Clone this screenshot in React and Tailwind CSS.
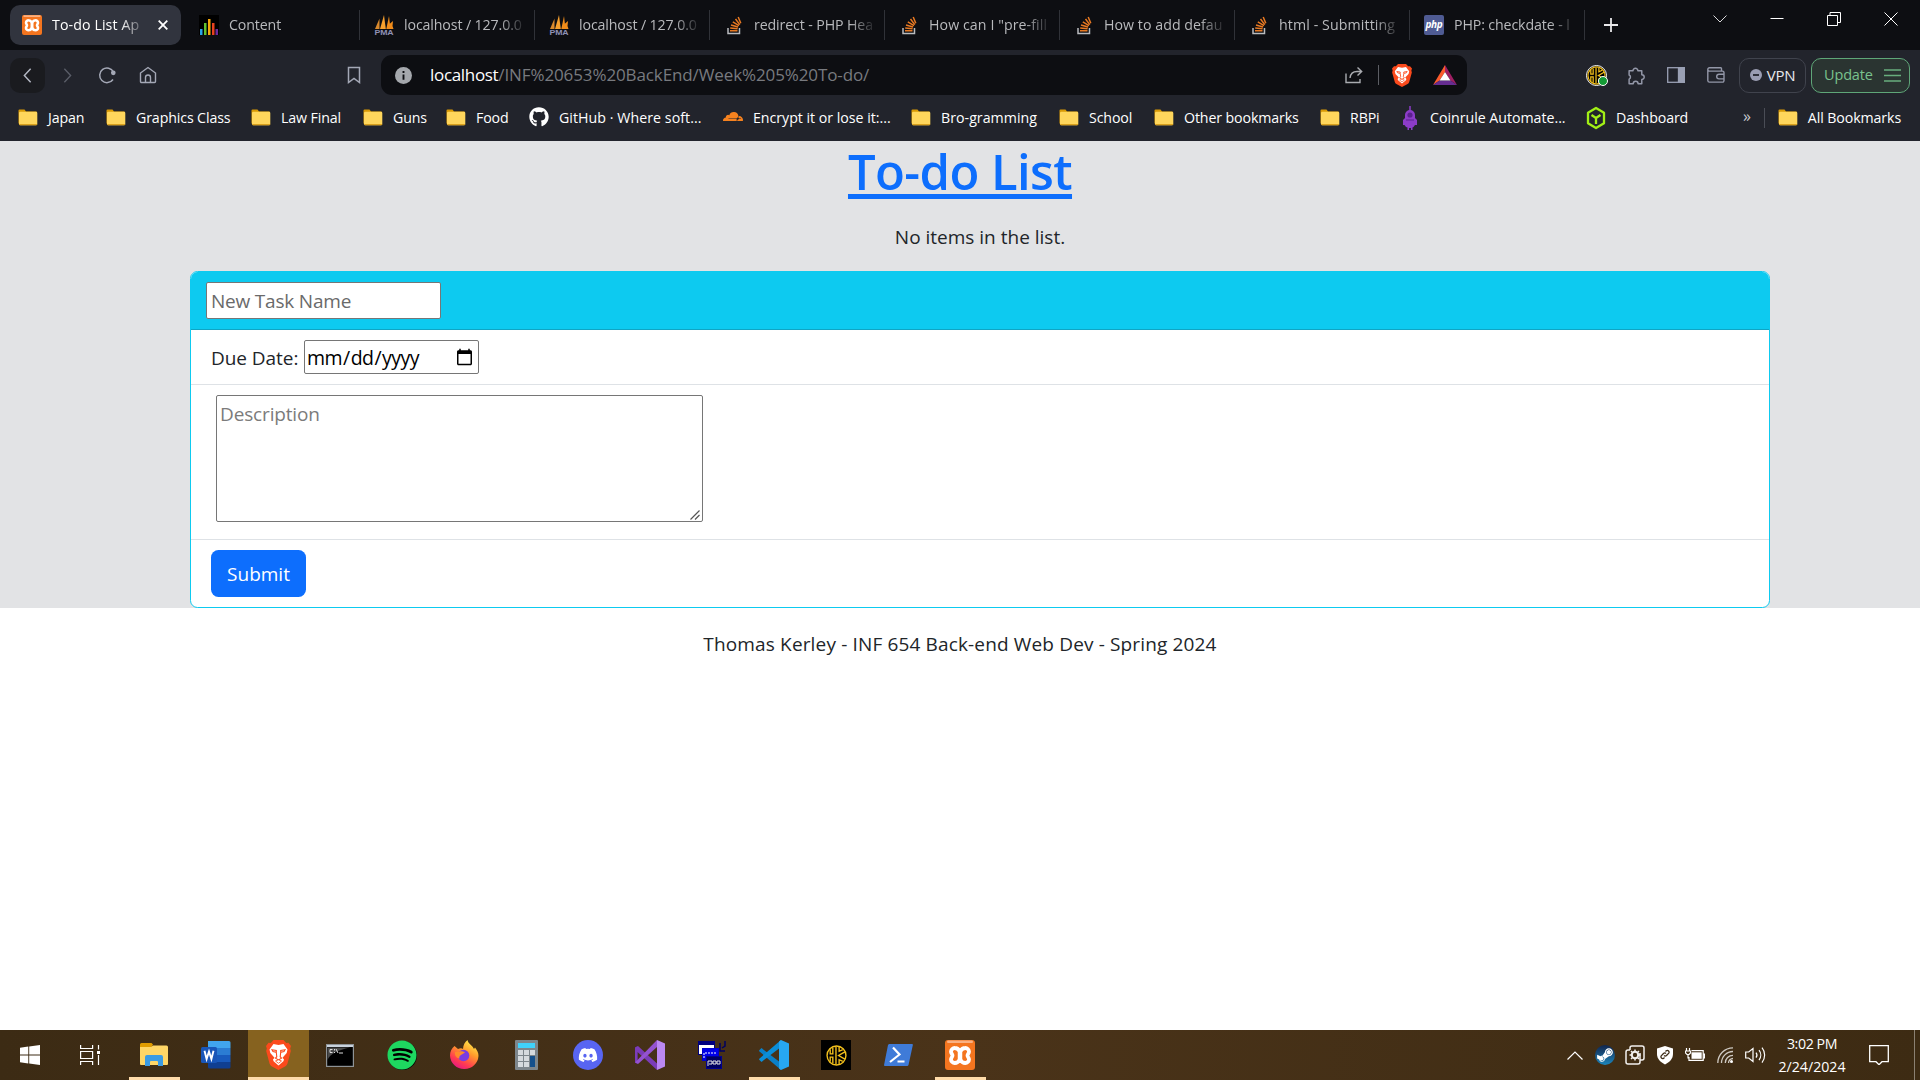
import React from "react";
import { FaGithub, FaSpotify, FaDiscord, FaCloudflare, FaSteamSymbol } from "react-icons/fa";

/* ---------- Brand drawings ---------- */

function Xampp({ className }) {
  return (
    <svg viewBox="0 0 30 30" className={className}>
      <rect x="0" y="0" width="30" height="30" rx="3" fill="#f4751f" />
      <rect x="2" y="0.5" width="26" height="2.5" rx="1.2" fill="#f9b183" />
      <path
        d="M15 11.500c-1.500-2.500-3-3.500-5.200-3.500A3.700 3.700 0 0 0 6 11.600c0 2 1.500 2.400 1.500 3.900S6 17.500 6 19.400A3.700 3.700 0 0 0 9.800 23c2.200 0 3.700-1 5.200-3.500 1.500 2.500 3 3.500 5.200 3.500a3.700 3.700 0 0 0 3.800-3.600c0-1.900-1.500-2.400-1.500-3.900s1.500-1.900 1.500-3.900A3.700 3.700 0 0 0 20.200 8C18 8 16.500 9 15 11.500Z"
        fill="none"
        stroke="#fff"
        strokeWidth="3.800"
        strokeLinejoin="round"
      />
      <path d="M15 11v9" stroke="#fff" strokeWidth="4.500" />
    </svg>
  );
}

function Bars() {
  return (
    <svg viewBox="0 0 20 20" className="h-5 w-5">
      <rect width="20" height="20" fill="#000" />
      <rect x="1" y="14" width="2.500" height="6" fill="#29a3e8" />
      <rect x="5" y="8" width="2.500" height="12" fill="#62c12d" />
      <rect x="9" y="4" width="2.500" height="16" fill="#f5a80c" />
      <rect x="13" y="8" width="2.500" height="12" fill="#e8421f" />
      <rect x="16.500" y="14" width="2.500" height="6" fill="#6b2a9c" />
    </svg>
  );
}

function Pma() {
  return (
    <svg viewBox="0 0 20 20" className="h-5 w-5">
      <path d="M1 14 5.500 3.500V14Z" fill="#d9892c" />
      <path d="M6 14 10 0l1.800 14Z" fill="#f6a02e" />
      <path d="M12.300 14 15 1l1.500 13Z" fill="#f08c1a" />
      <path d="M15.500 9l3.500-3-.5 5 1 3h-4Z" fill="#f08c1a" />
      <text x="10" y="19.500" textAnchor="middle" textLength="19" lengthAdjust="spacingAndGlyphs" className="font-['Liberation_Sans'] text-[8px] font-bold" fill="#8f91b4">
        PMA
      </text>
    </svg>
  );
}

function Stack() {
  return (
    <svg viewBox="0 0 20 20" className="h-5 w-5" fill="none">
      <path d="M4 13v5.500h11.500V13" stroke="#b9bbbe" strokeWidth="1.500" />
      <path d="M6 15.800h7.500M6.200 13l7.400.8M7 10l7.100 2M8.800 6.800l6.200 3.900M11.500 4l4.300 5.600M14.200 2l2.600 6.300" stroke="#e87922" strokeWidth="1.500" />
    </svg>
  );
}

function Php() {
  return (
    <div className="flex h-5 w-5 items-center justify-center rounded-[2px] bg-[#4f5b93] font-['Open_Sans'] text-[10px] leading-none font-bold tracking-[-0.3px] text-white italic">
      <span className="-mt-0.5">php</span>
    </div>
  );
}

function Folder() {
  return (
    <svg viewBox="0 0 20 17" className="h-[17px] w-5 shrink-0">
      <path d="M.5 1.500A1 1 0 0 1 1.500.5h5l1.500 2h10a1 1 0 0 1 1 1v11h-18.500Z" fill="#d99a06" />
      <path d="M1 4a1.300 1.300 0 0 1 1.300-1.300H18A1.300 1.300 0 0 1 19.300 4v11a1.300 1.300 0 0 1-1.300 1.300H2.300A1.300 1.300 0 0 1 1 15Z" fill="#ffd65c" />
      <path d="M1 15h18.300a1.300 1.300 0 0 1-1.300 1.300H2.300A1.300 1.300 0 0 1 1 15Z" fill="#d9a01c" />
    </svg>
  );
}

function Brave({ className }) {
  return (
    <svg viewBox="0 0 25 30" preserveAspectRatio="none" className={className}>
      <path d="M7.500 0h10l2.700 3 2.300-.2L25 6l-.8 2.500.6 2.500-3.300 12.500a5 5 0 0 1-2 2.700L12.500 30l-7-3.800a5 5 0 0 1-2-2.700L.2 11l.6-2.500L0 6l2.500-3.200 2.300.2Z" fill="#fb4a1c" />
      <path d="M7.500 4l5 1 5-1 4 5.500-.8 3.500-4.200 4.700 1.500 1.800-.6 1.800-4.900 4.200-4.900-4.200L7 19.500l1.500-1.800L4.300 13l-.8-3.500Z" fill="#fff" />
      <path d="M6 9.800l4.300.7v1.800L7 11.500ZM19 9.800l-4.300.7v1.800l3.300-.8ZM10.300 12.500l.5 4.200-1.300 1.500 3 1.700 3-1.700-1.300-1.500.5-4.200" fill="none" stroke="#fb4a1c" strokeWidth="1.100" />
      <path d="M9.500 21l3-1.200 3 1.200-3 2.300Z" fill="#fff" stroke="#fb4a1c" strokeWidth=".8" />
    </svg>
  );
}

function Keeper({ className }) {
  return (
    <svg viewBox="0 0 20 20" className={className} fill="none" stroke="#f3c01c" strokeWidth="1.300">
      <circle cx="10" cy="10" r="9" />
      <path d="M4 4v4.500h2.500V2.500M4 16v-4.500h2.500v6M9.500 1.500v17M12.500 2v4l3.500-1.500M12.500 18v-4l3.500 1.500M18 6.500 12 10l6 3.500" />
    </svg>
  );
}

function Bat() {
  return (
    <svg viewBox="0 0 24 20" className="h-5 w-6">
      <path d="M12 0 0 20l6.500-4.500L12 7Z" fill="#fb5b2c" />
      <path d="M12 0l12 20-6.500-4.500L12 7Z" fill="#9e1f63" />
      <path d="M0 20h24l-6.500-4.500h-11Z" fill="#662d91" />
      <path d="M12 7l5.500 8.500h-11Z" fill="#fff" />
    </svg>
  );
}

function Coinrule() {
  return (
    <svg viewBox="0 0 16 24" className="h-6 w-4">
      <path d="M8 0v5" stroke="#8c3cc8" strokeWidth="1.500" />
      <path d="M3 12V9a5 5 0 0 1 10 0v3l2 2v5h-2l-1.500 2-1 .5V24H9v-2H7v2H5.500v-2.500L4 21l-1.500-2H1v-5Z" fill="#8c3cc8" />
      <circle cx="8" cy="9" r="2.600" fill="#5b2190" />
      <path d="M4 14h8" stroke="#5b2190" />
    </svg>
  );
}

function Cube() {
  return (
    <svg viewBox="0 0 20 24" className="h-6 w-5" fill="none" stroke="#a2ef16" strokeWidth="2.300" strokeLinejoin="round">
      <path d="M10 2 18 6.800v10.400L10 22 2 17.200V6.800Z" />
      <path d="M5.500 9 10 12l4.500-3M10 12v6" />
    </svg>
  );
}

/* ---------- Browser tab strip ---------- */

const tabs = [
  { title: "Content", icon: <Bars /> },
  { title: "localhost / 127.0.0", icon: <Pma /> },
  { title: "localhost / 127.0.0", icon: <Pma /> },
  { title: "redirect - PHP Hea", icon: <Stack /> },
  { title: 'How can I "pre-fill', icon: <Stack />, track: "tracking-[0.08px]" },
  { title: "How to add defau", icon: <Stack />, track: "tracking-[0.04px]" },
  { title: "html - Submitting", icon: <Stack />, track: "tracking-[0.1px]" },
  { title: "PHP: checkdate - l", icon: <Php /> },
];

function TabStrip() {
  return (
    <div className="flex h-[50px] items-center bg-[#0d0e12] pl-2.5 text-[14.2px] tracking-[-0.12px]">
      <div className="mr-1 flex h-10 w-[171px] shrink-0 items-center rounded-[10px] bg-[#31343e] pl-3 text-white">
        <Xampp className="h-5 w-5 shrink-0" />
        <span className="ml-2.5 w-[95px] tracking-[0.1px] whitespace-nowrap [mask-image:linear-gradient(to_right,#000_72%,transparent)]">To-do List Ap</span>
        <svg viewBox="0 0 10 10" className="ml-[11px] h-2.5 w-2.5" stroke="#fff" strokeWidth="1.800">
          <path d="M.7.7l8.600 8.600M9.300.7.700 9.300" />
        </svg>
      </div>
      {tabs.map((t, i) => (
        <div key={i} className={`flex h-[30px] w-[175px] shrink-0 items-center border-r border-[#303238] pl-[14px] text-[#b9babd] ${t.track || ""}`}>
          <span className="w-5 shrink-0">{t.icon}</span>
          <span className="ml-2.5 w-[123px] whitespace-nowrap [mask-image:linear-gradient(to_right,#000_78%,transparent)]">{t.title}</span>
        </div>
      ))}
      <svg viewBox="0 0 14 14" className="ml-[19px] h-3.5 w-3.5" stroke="#e8e8ea" strokeWidth="1.800">
        <path d="M7 0v14M0 7h14" />
      </svg>
      <div className="-mt-3 ml-auto flex items-center gap-[43px] pr-[22px]">
        <svg viewBox="0 0 14 14" className="h-3.5 w-3.5" fill="none" stroke="#d8d8da">
          <path d="M.5 3.500 7 10 13.500 3.500" />
        </svg>
        <svg viewBox="0 0 14 14" className="h-3.5 w-3.5" stroke="#fff">
          <path d="M.5 6.500h13" />
        </svg>
        <svg viewBox="0 0 14 14" className="h-3.5 w-3.5" fill="none" stroke="#fff">
          <path d="M.5 3.500h10v10H.5ZM3 3.500V.5h10.500v10H11" />
        </svg>
        <svg viewBox="0 0 14 14" className="h-3.5 w-3.5" stroke="#fff">
          <path d="M.5.5l13 13M13.500.5l-13 13" />
        </svg>
      </div>
    </div>
  );
}

/* ---------- Navigation bar ---------- */

function Toolbar() {
  return (
    <div className="flex h-[50px] items-center pl-2.5">
      <div className="flex h-[35px] w-[35px] items-center justify-center rounded-[10px] bg-[#1a1b1f]">
        <svg viewBox="0 0 10 18" className="h-[17px] w-[9px]" fill="none" stroke="#b4b8c4" strokeWidth="1.600">
          <path d="M8.500 1.500 1.500 9l7 7.500" />
        </svg>
      </div>
      <svg viewBox="0 0 10 18" className="ml-[18px] h-[17px] w-[9px]" fill="none" stroke="#5a5d68" strokeWidth="1.500">
        <path d="M1.500 1.500 8.500 9l-7 7.500" />
      </svg>
      <svg viewBox="0 0 18 18" className="ml-[26px] h-[18px] w-[18px]" fill="none" stroke="#a4a8b6" strokeWidth="1.500">
        <path d="M15 13.500A7.300 7.300 0 1 1 15.500 6" />
        <circle cx="15.300" cy="6.800" r="1.600" fill="#a4a8b6" />
      </svg>
      <svg viewBox="0 0 18 18" className="ml-[23px] h-[18px] w-[18px]" fill="none" stroke="#a4a8b6" strokeWidth="1.400">
        <path d="M1.500 7 9 1.500 16.500 7v8.500a1 1 0 0 1-1 1h-13a1 1 0 0 1-1-1ZM6.500 16v-4.500a2.500 2.500 0 0 1 5 0V16" />
      </svg>
      <svg viewBox="0 0 14 18" className="ml-[190px] h-[18px] w-3.5" fill="none" stroke="#a4a8b6" strokeWidth="1.500">
        <path d="M1.500 1.500h11v15L7 12.500l-5.500 4Z" />
      </svg>

      <div className="ml-5 flex h-10 w-[1086px] shrink-0 items-center rounded-[11px] bg-[#0d0e12] pl-3.5">
        <svg viewBox="0 0 18 18" className="h-[17px] w-[17px]">
          <circle cx="9" cy="9" r="9" fill="#a5a8ad" />
          <path d="M9 8v5.500M9 4.300v2" stroke="#0d0e12" strokeWidth="2" />
        </svg>
        <span className="ml-[18px] text-[17px] tracking-[-0.32px] text-white">localhost</span>
        <span className="text-[17px] tracking-[-0.11px] text-[#787a7f]">/INF%20653%20BackEnd/Week%205%20To-do/</span>
        <svg viewBox="0 0 18 18" className="ml-auto h-[18px] w-[18px]" fill="none" stroke="#a9abb0" strokeWidth="1.400">
          <path d="M1 7.500v9h14V13M5 12c.5-4.500 3-6.500 7-6.500h4M12.500 1.500l4.200 4-4.200 4" />
        </svg>
        <div className="ml-[15px] h-5 w-px bg-[#5c5e64]" />
        <Brave className="ml-[13px] h-[23px] w-5" />
        <div className="mr-[10px] ml-[21px]">
          <Bat />
        </div>
      </div>

      <div className="relative ml-[119px] h-[21px] w-[21px]">
        <div className="flex h-[21px] w-[21px] items-center justify-center rounded-full border border-white bg-black">
          <Keeper className="h-[19px] w-[19px]" />
        </div>
        <div className="absolute -right-px bottom-0 h-2.5 w-2.5 rounded-full border border-white bg-[#149b35]" />
      </div>
      <svg viewBox="0 0 18 18" className="ml-5 h-[19px] w-[19px]" fill="none" stroke="#9397a8" strokeWidth="1.400" strokeLinejoin="round">
        <path d="M2 4.500h3.700a2.300 2.300 0 1 1 4.600 0H14v3.700a2.300 2.300 0 1 1 0 4.600v4h-3.500a2.300 2.300 0 0 0-4.600 0H2v-4.300a2.200 2.200 0 0 0 0-4Z" />
      </svg>
      <svg viewBox="0 0 18 16" className="ml-[21px] h-4 w-[18px]" fill="none" stroke="#9aa0b4" strokeWidth="1.300">
        <rect x=".7" y=".7" width="16.600" height="14.600" />
        <rect x="11.500" y=".7" width="5.800" height="14.600" fill="#9aa0b4" />
      </svg>
      <svg viewBox="0 0 18 16" className="ml-[22px] h-4 w-[18px]" fill="none" stroke="#9397a8" strokeWidth="1.400">
        <path d="M14.500 4V1.500A.8.8 0 0 0 13.700.7H2.500a1.700 1.700 0 0 0 0 3.400h13a1.500 1.500 0 0 1 1.500 1.500v8a1.500 1.500 0 0 1-1.500 1.500h-13A1.700 1.700 0 0 1 .8 13.500v-11M17 7.300h-5a2.300 2.300 0 0 0 0 4.600h5" />
      </svg>
      <div className="ml-[14px] flex h-[35px] w-[67px] shrink-0 items-center justify-center gap-[5px] rounded-[10px] border border-[#40434d] text-[#e8e9ee]">
        <svg viewBox="0 0 12 12" className="h-3 w-3">
          <circle cx="6" cy="6" r="6" fill="#9a9db2" />
          <path d="M3 6h6" stroke="#22242c" strokeWidth="1.800" />
        </svg>
        <span className="text-[15px] tracking-[-0.2px]">VPN</span>
      </div>
      <div className="ml-[5px] flex h-[35px] w-[99px] shrink-0 items-center justify-between rounded-[10px] border-[1.5px] border-[#5fa678] bg-[#2a3431] pr-[8px] pl-[12px] text-[14.5px] tracking-[-0.15px] text-[#79c28d]">
        <span>Update</span>
        <svg viewBox="0 0 17 13" className="h-[13px] w-[17px]" stroke="#68ad7d" strokeWidth="1.500">
          <path d="M0 1h17M0 6.500h17M0 12h17" />
        </svg>
      </div>
    </div>
  );
}

/* ---------- Bookmarks bar ---------- */

const bookmarks = [
  { label: "Japan", w: "w-[88px]" },
  { label: "Graphics Class", w: "w-[145px]" },
  { label: "Law Final", w: "w-[112px]" },
  { label: "Guns", w: "w-[83px]" },
  { label: "Food", w: "w-[83px]" },
  { label: "GitHub · Where soft...", w: "w-[194px]", icon: <FaGithub className="h-5 w-5 text-white" />, track: "tracking-[0.05px]" },
  { label: "Encrypt it or lose it:...", w: "w-[188px]", icon: <FaCloudflare className="h-5 w-5 text-[#f6821f]" />, track: "tracking-[-0.02px]" },
  { label: "Bro-gramming", w: "w-[148px]", track: "tracking-[0.02px]" },
  { label: "School", w: "w-[95px]" },
  { label: "Other bookmarks", w: "w-[166px]" },
  { label: "RBPi", w: "w-[80px]" },
  { label: "Coinrule Automate...", w: "w-[186px]", icon: <Coinrule />, track: "tracking-[-0.02px]" },
  { label: "Dashboard", w: "w-[140px]", icon: <Cube /> },
];

function Bookmarks() {
  return (
    <div className="flex h-[41px] items-center pb-1.5 pl-[18px] text-[14.2px] tracking-[-0.12px] text-white">
      {bookmarks.map((b) => (
        <div key={b.label} className={`flex shrink-0 items-center gap-2.5 whitespace-nowrap ${b.w} ${b.track || ""}`}>
          <span className="flex w-5 shrink-0 justify-center">{b.icon || <Folder />}</span>
          <span>{b.label}</span>
        </div>
      ))}
      <span className="ml-[17px] pb-1 text-[16px] text-[#c6c8ce]">»</span>
      <div className="ml-[13px] h-5 w-px bg-[#4a4d56]" />
      <div className="ml-[13px] flex items-center gap-2.5 whitespace-nowrap">
        <Folder />
        <span className="tracking-[-0.1px]">All Bookmarks</span>
      </div>
    </div>
  );
}

/* ---------- Page ---------- */

function TodoPage() {
  return (
    <main className="flex-1 bg-white text-[19px] leading-[30px] text-[#212529]">
      <div className="flex h-[467px] flex-col bg-[#e2e3e5]">
        <h1 className="h-[60px] text-center text-[49px] leading-[61px] font-semibold tracking-[-0.6px] text-[#0d6efd] underline decoration-[5px] underline-offset-[4px]">To-do List</h1>
        <div className="mx-auto mt-[21px] w-[1580px] translate-x-5">
          <p className="text-center">No items in the list.</p>
          <form className="mt-[19px] h-[337px] overflow-hidden rounded-[7.5px] border border-[#0dcaf0] bg-white">
            <div className="flex h-[58px] items-start border-b border-[#0fa5c4] bg-[#0dcaf0] pt-2.5 pl-[15px]">
              <input placeholder="New Task Name" className="h-[37px] w-[235px] rounded-[2px] border border-[#767676] bg-white px-1 tracking-[-0.2px] placeholder:text-[#6a6a6a]" />
            </div>
            <div className="flex h-[55px] items-center border-b border-[#dee2e6] pl-5">
              <label className="w-[93px] pt-0.5 tracking-[-0.05px]">Due Date:</label>
              <input type="date" className="h-[34px] w-[175px] rounded-[2px] border border-[#767676] pt-0.5 pr-0.5 pl-px text-[19.5px] tracking-[-0.55px] text-black" />
            </div>
            <div className="flex h-[155px] items-start border-b border-[#dee2e6] pt-2.5 pl-[25px]">
              <div className="relative h-[127px] w-[487px]">
                <textarea placeholder="Description" className="h-full w-full resize-none rounded-[2px] border border-[#767676] px-[3px] py-[3px] tracking-[-0.15px] placeholder:text-[#7b7b7b]" />
                <svg viewBox="0 0 10 10" className="absolute right-[3px] bottom-0.5 h-2.5 w-2.5" stroke="#555" strokeWidth="1.200">
                  <path d="M.5 9.500l9-9M5 9.500l4.500-4.500" />
                </svg>
              </div>
            </div>
            <div className="flex h-[67px] items-center pl-5">
              <button className="h-[47px] w-[95px] rounded-[7.5px] bg-[#0d6efd] text-white">Submit</button>
            </div>
          </form>
        </div>
      </div>
      <p className="mt-[21px] text-center tracking-[0.15px]">Thomas Kerley - INF 654 Back-end Web Dev - Spring 2024</p>
    </main>
  );
}

/* ---------- Taskbar ---------- */

const apps = [
  {
    name: "Explorer",
    open: true,
    icon: (
      <svg viewBox="0 0 28 24" className="h-6 w-7">
        <path d="M0 1.500A1.500 1.500 0 0 1 1.500 0h10L13 1.500 11.500 4H0Z" fill="#e09c00" />
        <path d="M0 4h11l2-1.500h13.500A1.500 1.500 0 0 1 28 4v17a1 1 0 0 1-1 1H1a1 1 0 0 1-1-1Z" fill="#ffd666" />
        <path d="M5 23V14a2 2 0 0 1 2-2h14a2 2 0 0 1 2 2v9h-5v-4a1 1 0 0 0-1-1h-6a1 1 0 0 0-1 1v4Z" fill="#3b9be3" />
      </svg>
    ),
  },
  {
    name: "Word",
    icon: (
      <svg viewBox="0 0 30 28" className="h-7 w-[30px]">
        <path d="M7 0h21a1.500 1.500 0 0 1 1.500 1.500V7H7Z" fill="#41a5ee" />
        <path d="M7 7h22.500v7H7Z" fill="#2b7cd3" />
        <path d="M7 14h22.500v7H7Z" fill="#185abd" />
        <path d="M7 21h22.500v5a1.500 1.500 0 0 1-1.500 1.500H8.500A1.500 1.500 0 0 1 7 26Z" fill="#103f91" />
        <rect x="0" y="6" width="16" height="16" rx="1.500" fill="#1956b8" />
        <path d="M3.500 9.800 5.600 18 8 10.500 10.400 18l2.100-8.200" fill="none" stroke="#fff" strokeWidth="1.900" />
      </svg>
    ),
  },
  { name: "Brave", active: true, icon: <Brave className="h-[30px] w-[25px]" /> },
  {
    name: "Terminal",
    icon: (
      <svg viewBox="0 0 28 23" className="h-[23px] w-7">
        <rect x=".6" y=".6" width="26.800" height="21.800" fill="#000" stroke="#8e9396" strokeWidth="1.200" />
        <path d="M1 2h26" stroke="#c9d2dc" strokeWidth="2" />
        <path d="M1.500 3.500H24C12 6 4 10 1.500 16Z" fill="#4a4a4a" />
        <path d="M6.500 5.500H4v3h2.500M8.500 5v1.500M8.500 8v1M10 5l2 4M13 9h4" stroke="#ddd" fill="none" />
      </svg>
    ),
  },
  {
    name: "Spotify",
    icon: (
      <span className="flex h-[29px] w-[29px] items-center justify-center rounded-full bg-black">
        <FaSpotify className="h-[30px] w-[30px] shrink-0 text-[#1ed760]" />
      </span>
    ),
  },
  {
    name: "Firefox",
    icon: (
      <svg viewBox="0 0 30 30" className="h-[30px] w-[30px]">
        <defs>
          <linearGradient id="fox" x1=".8" y1="0" x2=".25" y2="1">
            <stop offset="0" stopColor="#fff44f" />
            <stop offset=".4" stopColor="#ff9a2b" />
            <stop offset=".75" stopColor="#ff3b51" />
            <stop offset="1" stopColor="#e31587" />
          </linearGradient>
        </defs>
        <path d="M5.500 6l3.500 3c2-1 4-1 5 0 .2-4 1.800-7 4.500-9 .5 4 5 5 6.500 9l1-1.500c2 2.500 3.500 5 3.500 8.500A14 14 0 0 1 15.500 29 14 14 0 0 1 1 15.500c0-4 1.500-7 4.500-9.500Z" fill="url(#fox)" />
        <circle cx="14.500" cy="15.500" r="5.800" fill="#7a3be0" />
        <path d="M6 12c3 0 5-1 8-.5l2 1-4 2.500c-1.500 1-2 2-1.500 3.500C7 18 5.500 15 6 12Z" fill="#ff8a2a" />
      </svg>
    ),
  },
  {
    name: "Calculator",
    icon: (
      <svg viewBox="0 0 23 30" className="h-[30px] w-[23px]">
        <rect width="23" height="30" rx="1" fill="#7d868c" />
        <rect x="3" y="3" width="17" height="5" fill="#40d2fb" />
        <g fill="#d5dade">
          <rect x="3" y="10" width="5" height="5" />
          <rect x="9" y="10" width="5" height="5" />
          <rect x="15" y="10" width="5" height="5" />
          <rect x="3" y="16" width="5" height="5" />
          <rect x="9" y="16" width="5" height="5" />
          <rect x="3" y="22" width="5" height="5" />
          <rect x="9" y="22" width="5" height="5" />
        </g>
        <rect x="15" y="16" width="5" height="11" fill="#14508c" />
      </svg>
    ),
  },
  {
    name: "Discord",
    icon: (
      <span className="flex h-[30px] w-[30px] items-center justify-center rounded-full bg-[#5865f2]">
        <FaDiscord className="h-5 w-5 text-white" />
      </span>
    ),
  },
  {
    name: "Visual Studio",
    icon: (
      <svg viewBox="0 0 30 30" className="h-[30px] w-[30px]">
        <path d="M0 7.500 2.500 6v18L0 22.500Z" fill="#52218a" />
        <path d="M0 7.500 3 6l19 17.500V30L2.500 12v10L0 22.500Z" fill="#7b3cb8" />
        <path d="M3 24 0 22.500 22 0v7Z" fill="#9452cf" />
        <path d="M22 0l8 3.500v23L22 30Z" fill="#bb88f2" />
      </svg>
    ),
  },
  {
    name: "Putty",
    icon: (
      <svg viewBox="0 0 28 28" className="h-7 w-7">
        <rect x=".5" y=".5" width="16" height="13" fill="#fff" stroke="#000080" />
        <path d="M0 2h17" stroke="#000080" strokeWidth="4" />
        <rect x="4.500" y="7.500" width="16" height="12" fill="#0000e8" stroke="#0000c8" />
        <path d="M6 17v-5h12" stroke="#fff" strokeDasharray="2 1" fill="none" />
        <rect x="8.500" y="15.500" width="15" height="12" fill="#000060" stroke="#000090" />
        <path d="M10 25v-5h4v3h-3M15 23v-3h3v3ZM19 23v-3h3v3Z" stroke="#e6e6e6" fill="none" />
        <path d="M22 2v8h5M27 0v5l-3 2" stroke="#000060" strokeWidth="1.500" fill="none" />
      </svg>
    ),
  },
  {
    name: "VS Code",
    open: true,
    icon: (
      <svg viewBox="0 0 30 30" className="h-[30px] w-[30px]">
        <path d="M0 10.500 2.500 8 22 23v7L0.500 11.500Z" fill="#0a80c8" />
        <path d="M0 19.500 2.500 22 22 7V0L.5 18.500Z" fill="#0b8ed8" />
        <path d="M22 0l8 3.500v23L22 30l-2-1.500V1.500Z" fill="#27a7f2" />
      </svg>
    ),
  },
  {
    name: "Keeper",
    icon: (
      <span className="flex h-[30px] w-[30px] items-center justify-center bg-black">
        <Keeper className="h-[21px] w-[21px]" />
      </span>
    ),
  },
  {
    name: "PowerShell",
    icon: (
      <svg viewBox="0 0 29 22" className="h-[22px] w-[29px]">
        <path d="M5 0h23a1 1 0 0 1 .8 1.300L24.500 21a1.500 1.500 0 0 1-1.300 1H1a1 1 0 0 1-.9-1.300L4 1Z" fill="#3f7bd8" />
        <path d="M9 3.500l6.500 7L6 18M13.500 17.500h7" stroke="#fff" strokeWidth="2.200" fill="none" />
      </svg>
    ),
  },
  { name: "XAMPP", open: true, icon: <Xampp className="h-[30px] w-[30px]" /> },
];

function Tray() {
  return (
    <div className="ml-auto flex h-full items-center text-white">
      <div className="flex items-center">
        <svg viewBox="0 0 16 9" className="mr-3 h-[9px] w-4" fill="none" stroke="#fff" strokeWidth="1.200">
          <path d="M.5 8.500 8 1l7.500 7.500" />
        </svg>
        <span className="mr-2.5 flex h-5 w-5 items-center justify-center rounded-full bg-linear-to-b from-[#10254d] to-[#1a87bd]">
          <FaSteamSymbol className="h-[18px] w-[18px]" />
        </span>
        <svg viewBox="0 0 20 20" className="mr-2.5 h-5 w-5" fill="none" stroke="#f2f0ee" strokeWidth="1.500">
          <path d="M5 5V3a2 2 0 0 1 2-2h10a2 2 0 0 1 2 2v10a2 2 0 0 1-2 2h-2" />
          <path d="M15 8v9a2 2 0 0 1-2 2H3a2 2 0 0 1-2-2V7a2 2 0 0 1 2-2h2" />
          <circle cx="10" cy="10" r="3.200" strokeWidth="2" />
          <path d="M10 4.500v2M10 13.500v2M4.500 10h2M13.500 10h2M6 6l1.500 1.500M14 6l-1.500 1.500M6 14l1.500-1.500M14 14l-1.500-1.500" />
        </svg>
        <svg viewBox="0 0 20 20" className="mr-2.5 h-5 w-5" fill="none">
          <path d="M10 1l8 2.500V9c0 5-3.500 8-8 10.500C5.500 17 2 14 2 9V3.500Z" fill="#fff" />
          <path d="M9.500 12.500 8.700 13.300a1.800 1.800 0 0 1-2.500-2.500L8.500 8.500a1.800 1.800 0 0 1 2.500 0M10.500 6.500l.8-.8a1.800 1.800 0 0 1 2.500 2.500L11.500 10.500a1.800 1.800 0 0 1-2.500 0" stroke="#3d2b16" strokeWidth="1.300" />
        </svg>
        <svg viewBox="0 0 20 14" className="mr-3 h-3.5 w-5" fill="none" stroke="#fff" strokeWidth="1.200">
          <path d="M6.500 2.600h11.700v9.800H4V9M18.500 6h1v4h-1M1.500 0v3M4.500 0v3M.5 3h5v2l-1.500 1.500h-2L.5 5ZM3 6.500v4" />
          <rect x="6.500" y="4.300" width="10.200" height="6.500" fill="#fff" stroke="none" />
        </svg>
        <svg viewBox="0 0 16 16" className="mr-3 h-4 w-4" fill="none" stroke="#cfcac3" strokeWidth="1.300">
          <path d="M.8 16A15.200 15.200 0 0 1 16 .8M4.500 16A11.500 11.500 0 0 1 16 4.500M8.300 16A7.700 7.700 0 0 1 16 8.300M11.500 16a4.500 4.500 0 0 1 4.500-4.500" />
          <circle cx="14.500" cy="14.500" r="1.500" fill="#fff" stroke="none" />
        </svg>
        <svg viewBox="0 0 21 18" className="h-[18px] w-[21px]" fill="none" stroke="#fff" strokeWidth="1.200">
          <path d="M.7 6h3L8 2.500v13L3.700 12h-3Z" />
          <path d="M11 6.500a4 4 0 0 1 0 5M14 4a8 8 0 0 1 0 10M17 1.500a12 12 0 0 1 0 15" />
        </svg>
      </div>
      <div className="ml-[10px] w-[72px] text-center text-[14.2px] leading-[23px]">
        <div className="tracking-[-0.4px]">3:02 PM</div>
        <div>2/24/2024</div>
      </div>
      <svg viewBox="0 0 20 20" className="ml-[21px] h-5 w-5" fill="none" stroke="#fff" strokeWidth="1.300">
        <path d="M.7.7h18.600v16H13l-3 3-3-3H.7Z" />
      </svg>
      <div className="ml-[25px] h-full w-px bg-[#8b8072]" />
      <div className="w-[5px]" />
    </div>
  );
}

function Taskbar() {
  return (
    <div className="flex h-[50px] items-center bg-linear-to-r from-[#3c2b14] via-[#4a3319] via-50% to-[#3d2b13]">
      <div className="flex w-[60px] justify-center">
        <svg viewBox="0 0 20 20" className="h-5 w-5" fill="#fff">
          <path d="M0 2.800 8.300 1.600V9.500H0ZM9.200 1.500 20 0v9.500H9.200ZM0 10.400h8.300v8L0 17.200ZM9.200 10.400H20V20L9.200 18.500Z" />
        </svg>
      </div>
      <div className="mr-[3px] flex w-[60px] justify-center">
        <svg viewBox="0 0 20 20" className="h-5 w-5" fill="none" stroke="#fff" strokeWidth="1.200">
          <path d="M.6 0v3.500h12V0M.6 20v-3.500h12V20M.6 6.500h12v7H.6ZM18.500 0v4.500M18.500 10v10" />
          <rect x="17" y="6" width="3" height="3" fill="#fff" stroke="none" />
        </svg>
      </div>
      {apps.map((a) => (
        <div key={a.name} aria-label={a.name} className="flex h-full w-[62px] justify-end">
          <div className={`flex h-full w-[61px] flex-col items-center ${a.active ? "bg-[#86621f]" : ""}`}>
            <div className="flex flex-1 items-center pt-[3px] pr-px">{a.icon}</div>
            <div className={`h-[3px] ${a.active ? "w-full bg-[#ffdcaa]" : a.open ? "w-[51px] bg-[#ffdcaa]" : "w-0"}`} />
          </div>
        </div>
      ))}
      <Tray />
    </div>
  );
}

export default function App() {
  return (
    <div className="flex h-[1080px] w-[1920px] flex-col overflow-hidden bg-[#22242c] font-['Open_Sans','Noto_Sans',sans-serif]">
      <TabStrip />
      <Toolbar />
      <Bookmarks />
      <TodoPage />
      <Taskbar />
    </div>
  );
}
